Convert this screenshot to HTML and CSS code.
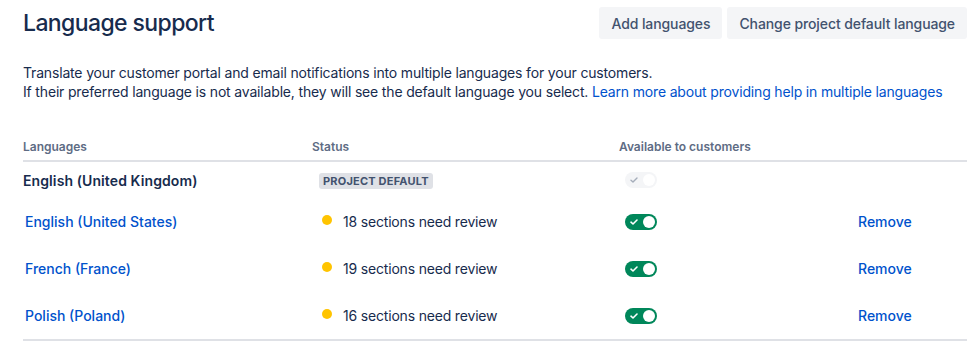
FILE: index.html
```html
<!DOCTYPE html>
<html lang="en">
<head>
<meta charset="utf-8">
<title>Language support</title>
<link rel="stylesheet" href="styles.css">
</head>
<body>
<div class="page">
  <div class="header">
    <h1 class="title">Language support</h1>
    <div class="actions">
      <button class="btn" type="button">Add languages</button>
      <button class="btn" type="button">Change project default language</button>
    </div>
  </div>
  <p class="desc">Translate your customer portal and email notifications into multiple languages for your customers.<br>If their preferred language is not available, they will see the default language you select. <a class="link" href="#">Learn more about providing help in multiple languages</a></p>

  <div class="table">
    <div class="row head">
      <div class="cell">Languages</div>
      <div class="cell">Status</div>
      <div class="cell">Available to customers</div>
      <div class="cell"></div>
    </div>
    <div class="row first">
      <div class="cell name">English (United Kingdom)</div>
      <div class="cell"><span class="lozenge">Project default</span></div>
      <div class="cell">
        <span class="toggle disabled">
          <svg class="check" width="10" height="10" viewBox="0 0 10 10"><path d="M2 5.2 L4 7 L8 3" fill="none" stroke="currentColor" stroke-width="1.4" stroke-linecap="round" stroke-linejoin="round"/></svg>
          <span class="knob"></span>
        </span>
      </div>
      <div class="cell"></div>
    </div>
    <div class="row">
      <div class="cell"><a class="lang" href="#">English (United States)</a></div>
      <div class="cell status"><span class="dot"></span>18 sections need review</div>
      <div class="cell">
        <span class="toggle on">
          <svg class="check" width="10" height="10" viewBox="0 0 10 10"><path d="M2 5.2 L4 7 L8 3" fill="none" stroke="currentColor" stroke-width="1.6" stroke-linecap="round" stroke-linejoin="round"/></svg>
          <span class="knob"></span>
        </span>
      </div>
      <div class="cell"><a class="remove" href="#">Remove</a></div>
    </div>
    <div class="row">
      <div class="cell"><a class="lang" href="#">French (France)</a></div>
      <div class="cell status"><span class="dot"></span>19 sections need review</div>
      <div class="cell">
        <span class="toggle on">
          <svg class="check" width="10" height="10" viewBox="0 0 10 10"><path d="M2 5.2 L4 7 L8 3" fill="none" stroke="currentColor" stroke-width="1.6" stroke-linecap="round" stroke-linejoin="round"/></svg>
          <span class="knob"></span>
        </span>
      </div>
      <div class="cell"><a class="remove" href="#">Remove</a></div>
    </div>
    <div class="row last">
      <div class="cell"><a class="lang" href="#">Polish (Poland)</a></div>
      <div class="cell status"><span class="dot"></span>16 sections need review</div>
      <div class="cell">
        <span class="toggle on">
          <svg class="check" width="10" height="10" viewBox="0 0 10 10"><path d="M2 5.2 L4 7 L8 3" fill="none" stroke="currentColor" stroke-width="1.6" stroke-linecap="round" stroke-linejoin="round"/></svg>
          <span class="knob"></span>
        </span>
      </div>
      <div class="cell"><a class="remove" href="#">Remove</a></div>
    </div>
  </div>
</div>
</body>
</html>
```
FILE: styles.css
```css
* { box-sizing: border-box; }
html, body { margin: 0; background: #ffffff; }
body {
  font-family: Inter, "Noto Sans", "Liberation Sans", sans-serif;
  color: #172B4D;
  font-size: 14px;
}
.page { padding: 7px 13px 0 23px; }
.header {
  display: flex;
  justify-content: space-between;
  align-items: center;
  height: 32px;
}
.title {
  margin: 0;
  font-size: 23px;
  font-weight: 500;
  line-height: 32px;
  color: #172B4D;
  letter-spacing: -0.6px;
}
.actions { display: flex; gap: 5px; }
.btn {
  height: 32px;
  padding: 0 12px;
  border: none;
  border-radius: 3px;
  background: #F4F5F7;
  color: #42526E;
  font-family: inherit;
  font-size: 14px;
  font-weight: 500;
  letter-spacing: -0.1px;
}
.desc {
  margin: 24px 0 0;
  font-size: 14px;
  line-height: 19px;
  color: #172B4D;
  letter-spacing: -0.17px;
  white-space: nowrap;
}
.link { color: #0052CC; text-decoration: none; }

.table { margin-top: 38px; }
.row {
  display: grid;
  grid-template-columns: 289px 307px 239px 1fr;
  align-items: center;
  height: 47px;
}
.row.head {
  height: auto;
  align-items: end;
  padding-bottom: 5px;
  border-bottom: 2px solid #DFE1E6;
  font-size: 12px;
  font-weight: 600;
  line-height: 16px;
  color: #5E6C84;
}
.row.first { height: 36px; padding-top: 0; }
.row.last { border-bottom: 2px solid #DFE1E6; height: 49px; padding-bottom: 0; }
.name { font-weight: 600; color: #172B4D; letter-spacing: 0.1px; }
.lang, .remove {
  color: #0052CC;
  font-weight: 500;
  text-decoration: none;
}
.lang { padding-left: 2px; }
.lozenge {
  display: inline-block;
  margin-left: 7px;
  padding: 0 4px;
  height: 16px;
  line-height: 16px;
  border-radius: 3px;
  background: #DFE1E6;
  color: #42526E;
  font-size: 11px;
  font-weight: 700;
  text-transform: uppercase;
  letter-spacing: 0.2px;
}
.status { display: flex; align-items: center; color: #172B4D; letter-spacing: -0.18px; }
.dot {
  width: 10px;
  height: 10px;
  border-radius: 50%;
  background: #FFC400;
  margin: -3px 11px 0 10px;
  flex: none;
}
.toggle {
  position: relative;
  display: flex;
  align-items: center;
  width: 32px;
  height: 16px;
  margin-left: 6px;
  border-radius: 8px;
}
.toggle .check { margin-left: 4px; }
.toggle .knob {
  position: absolute;
  right: 2px;
  top: 2px;
  width: 12px;
  height: 12px;
  border-radius: 50%;
  background: #ffffff;
}
.toggle.on { background: #00875A; color: #ffffff; }
.toggle.disabled { background: #F4F5F7; color: #A5ADBA; }
```
